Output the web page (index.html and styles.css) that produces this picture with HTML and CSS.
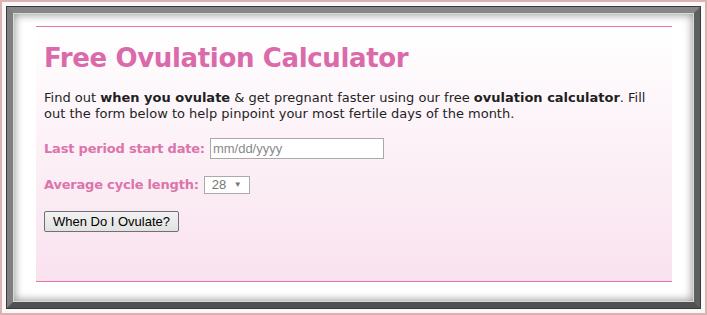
FILE: index.html
```html
<!DOCTYPE html>
<html>
<head>
<meta charset="utf-8">
<link rel="stylesheet" href="styles.css">
</head>
<body>
<div class="page">
  <div class="frame">
    <div class="content">
      <h1 class="title">Free Ovulation Calculator</h1>
      <p class="intro">Find out <b>when you ovulate</b> &amp; get pregnant faster using our free <b>ovulation calculator</b>. Fill out the form below to help pinpoint your most fertile days of the month.</p>
      <form class="form">
        <div class="row">
          <label class="label">Last period start date:</label>
          <input class="date" type="text" placeholder="mm/dd/yyyy">
        </div>
        <div class="row row-2">
          <label class="label">Average cycle length:</label>
          <span class="select"><span class="select-val">28</span><span class="select-arrow">▼</span></span>
        </div>
        <div class="row row-3">
          <button class="btn" type="button">When Do I Ovulate?</button>
        </div>
      </form>
    </div>
  </div>
</div>
</body>
</html>
```

FILE: styles.css
```css
html, body {
  margin: 0;
  padding: 0;
  background: #fff;
}
.page {
  width: 707px;
  height: 315px;
  box-sizing: border-box;
  border: 2px solid #dcb3b5;
  padding: 5px;
  background: #fdf8f8;
}
.frame {
  width: 693px;
  height: 301px;
  box-sizing: border-box;
  border: 6px solid #7c7d7d;
  border-top-color: #858686;
  border-left-color: #7e7f7f;
  border-bottom-color: #4f5252;
  border-right-color: #5d6060;
  background: #fff;
  box-shadow: inset 0 0 0 1px #d8d8d8, inset 0 0 8px 2px rgba(0,0,0,0.4), 0 0 0 1px #3a3a3a;
  padding: 13px 22px 20px 23px;
}
.content {
  height: 256px;
  box-sizing: border-box;
  border-top: 1px solid #e374ab;
  border-bottom: 1px solid #e374ab;
  background: linear-gradient(to bottom, #ffffff 0%, #fdf6fa 30%, #f9e2ee 100%);
  padding: 0 8px;
  font-family: "DejaVu Sans", Verdana, sans-serif;
  color: #222;
}
.title {
  margin: 16px 0 0 0;
  font-size: 26px;
  line-height: 30px;
  font-weight: bold;
  color: #db6aab;
  letter-spacing: -0.35px;
}
.intro {
  margin: 17px 0 0 0;
  font-size: 13px;
  line-height: 16px;
  color: #1f1f1f;
}
.form {
  margin: 16px 0 0 0;
}
.row {
  display: flex;
  align-items: center;
  height: 21px;
}
.row-2 {
  margin-top: 15px;
}
.row-3 {
  margin-top: 16px;
}
.label {
  font-size: 13px;
  font-weight: bold;
  color: #dc74ac;
  letter-spacing: -0.2px;
  margin-right: 5px;
}
.date {
  width: 174px;
  height: 21px;
  box-sizing: border-box;
  border: 1px solid #a9a9a9;
  background: #fff;
  padding: 0 2px;
  font-family: "Liberation Sans", Arial, sans-serif;
  font-size: 13px;
  margin: 0;
}
.date::placeholder {
  color: #8a8a8a;
}
.select {
  display: inline-flex;
  align-items: center;
  width: 46px;
  height: 18px;
  box-sizing: border-box;
  border: 1px solid #aaa;
  background: #fff;
  font-family: "Liberation Sans", Arial, sans-serif;
  font-size: 13px;
  color: #777;
  padding-left: 7px;
}
.select-val {
  flex: 1;
}
.select-arrow {
  font-size: 8px;
  color: #777;
  margin-right: 7px;
}
.btn {
  height: 21px;
  width: 135px;
  box-sizing: border-box;
  border: 1px solid #707070;
  border-radius: 2px;
  background: linear-gradient(to bottom, #f2f2f2, #e2e2e2);
  font-family: "Liberation Sans", Arial, sans-serif;
  font-size: 13px;
  color: #000;
  padding: 0;
  margin: 0;
}
```
